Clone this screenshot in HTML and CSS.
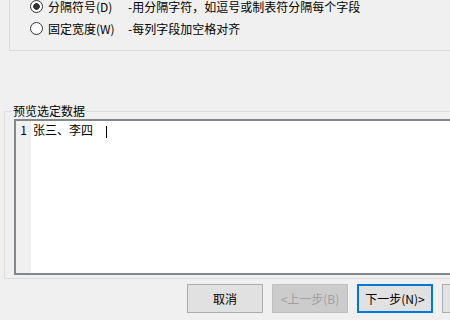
FILE: index.html
```html
<!DOCTYPE html>
<html>
<head>
<meta charset="utf-8">
<link rel="stylesheet" href="styles.css">
</head>
<body>
<div class="dialog">
  <div class="options">
    <div class="opt">
      <span class="radio checked"></span>
      <span class="opt-label">分隔符号(D)</span>
      <span class="opt-desc">-用分隔字符，如逗号或制表符分隔每个字段</span>
    </div>
    <div class="opt">
      <span class="radio"></span>
      <span class="opt-label">固定宽度(W)</span>
      <span class="opt-desc">-每列字段加空格对齐</span>
    </div>
  </div>
  <fieldset class="preview">
    <legend>预览选定数据</legend>
    <div class="textbox">
      <div class="gutter">1</div>
      <div class="content"><span>张三、李四</span><span class="caret"></span></div>
    </div>
  </fieldset>
  <div class="buttons">
    <button class="btn">取消</button>
    <button class="btn" disabled>&lt;上一步(B)</button>
    <button class="btn default">下一步(N)&gt;</button>
    <button class="btn"></button>
  </div>
</div>
</body>
</html>
```
FILE: styles.css
```css
html, body {
  margin: 0;
  padding: 0;
}
body {
  background: #f0f0f0;
  width: 450px;
  height: 320px;
  overflow: hidden;
  font-family: "Noto Sans CJK SC", "Microsoft YaHei", sans-serif;
  font-size: 12px;
  color: #000;
}
.dialog {
  width: 450px;
  height: 320px;
  overflow: hidden;
}
.options {
  margin: -5px 0 0 9px;
  width: 470px;
  height: 55px;
  border-left: 1px solid #dcdcdc;
  border-bottom: 1px solid #dcdcdc;
}
.opt {
  display: flex;
  align-items: center;
  height: 22px;
  padding-left: 20px;
  white-space: nowrap;
}
.radio {
  flex: none;
  width: 13px;
  height: 13px;
  box-sizing: border-box;
  border: 1px solid #333;
  border-radius: 50%;
  background: #fff;
}
.radio.checked {
  background: radial-gradient(circle, #333 0 3px, #fff 3.6px);
}
.opt-label {
  margin-left: 5px;
  width: 80px;
}
.preview {
  margin: 52px 0 0 4px;
  padding: 0 0 3px 9px;
  width: 470px;
  min-width: 0;
  border: 1px solid #dcdcdc;
  border-right: none;
}
.preview legend {
  margin-left: -2px;
  padding: 0 1px;
  line-height: 16px;
}
.textbox {
  display: flex;
  height: 152px;
  border: 2px solid #82878c;
  border-right: none;
}
.gutter {
  width: 15px;
  background: #f0f0f0;
  text-align: center;
  padding-top: 1px;
  line-height: 16px;
}
.content {
  flex: 1;
  background: #fff;
  padding: 1px 0 0 2px;
  line-height: 16px;
  white-space: nowrap;
}
.caret {
  display: inline-block;
  width: 1px;
  height: 12px;
  margin-left: 13px;
  background: #000;
  vertical-align: -3px;
}
.buttons {
  display: flex;
  gap: 9px;
  margin-top: 5px;
  padding-left: 187px;
}
.btn {
  flex: none;
  width: 76px;
  height: 29px;
  box-sizing: border-box;
  padding: 0;
  border: 1px solid #adadad;
  background: #e1e1e1;
  font: inherit;
  color: #000;
}
.btn:disabled {
  background: #cccccc;
  border-color: #bfbfbf;
  color: #a0a0a0;
}
.btn.default {
  border: 2px solid #0078d7;
}
```
